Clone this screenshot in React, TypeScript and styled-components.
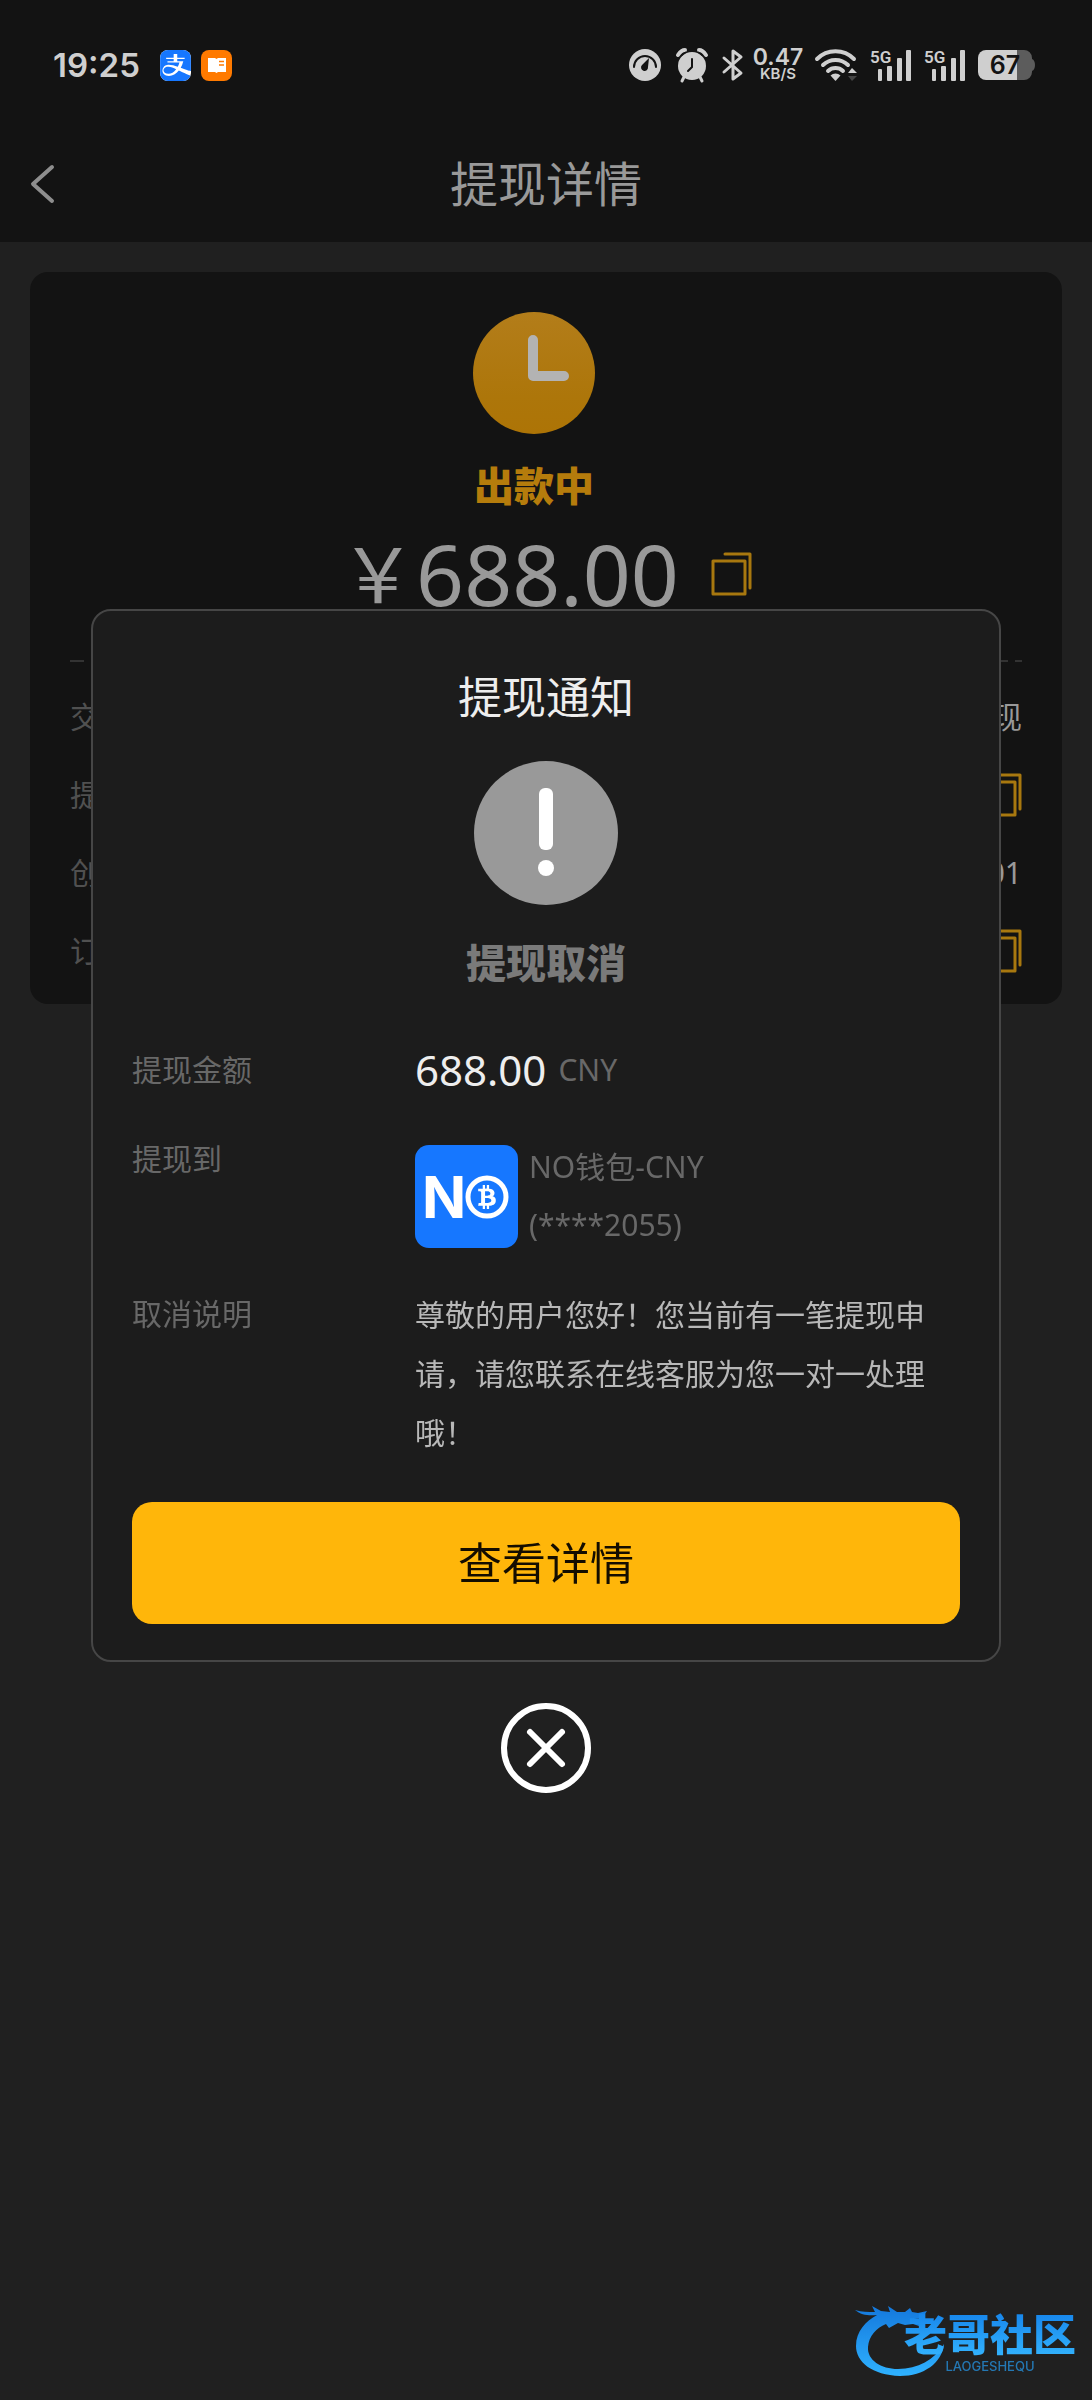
import React from 'react';
import styled, { createGlobalStyle } from 'styled-components';
import { SiAlipay } from 'react-icons/si';
import { FaBtc } from 'react-icons/fa';

const GlobalStyle = createGlobalStyle`
  *, *::before, *::after { box-sizing: border-box; }
  body {
    margin: 0;
    background: #202020;
    font-family: "Noto Sans", "Noto Sans CJK SC", sans-serif;
    font-weight: 400;
    color: #999;
  }
  button { font: inherit; border: 0; padding: 0; background: none; cursor: pointer; }
  h1, h2, p, dl, dt, dd { margin: 0; font-weight: inherit; }
  svg { display: block; flex: none; overflow: visible; }
`;

const Page = styled.div`
  min-height: 100vh;
  background: #202020;
`;

const StatusBar = styled.div`
  display: flex;
  align-items: center;
  justify-content: space-between;
  height: 130px;
  padding: 0 57px 0 53px;
  background: #131313;
  color: #cfcfcf;
  font-family: Inter, sans-serif;
`;

const StatusGroup = styled.div<{ $gap: number }>`
  display: flex;
  align-items: center;
  gap: ${(p) => p.$gap}px;
`;

const Clock = styled.span`
  margin-right: 10px;
  font-size: 33px;
  line-height: 40px;
  font-weight: 600;
`;

const AppTile = styled.span<{ $bg: string; $fg: string }>`
  display: flex;
  width: 31px;
  height: 31px;
  border-radius: 8px;
  overflow: hidden;
  background: ${(p) => p.$bg};
  color: ${(p) => p.$fg};
`;

const Speed = styled.span`
  display: flex;
  flex-direction: column;
  align-items: center;
  width: 48px;
  font-weight: 600;
  font-size: 23px;
  line-height: 18px;
`;

const SpeedUnit = styled.span`
  font-size: 15px;
  line-height: 16px;
`;

const Header = styled.header`
  display: grid;
  grid-template-columns: 80px 1fr 80px;
  align-items: center;
  height: 112px;
  padding-bottom: 4px;
  background: #131313;
`;

const BackButton = styled.button`
  display: flex;
  padding-left: 30px;
  color: #8e8e8e;
`;

const PageTitle = styled.h1`
  text-align: center;
  font-size: 48px;
  line-height: 64px;
`;

const Card = styled.section`
  margin: 30px 30px 0;
  padding: 40px 40px 14px;
  border-radius: 18px;
  background: #131313;
`;

const Summary = styled.div`
  display: flex;
  flex-direction: column;
  align-items: center;
  gap: 24px;
  padding-right: 24px;
`;

const StateText = styled.p<{ $color: string }>`
  font-size: 40px;
  line-height: 56px;
  font-weight: 900;
  color: ${(p) => p.$color};
`;

const AmountRow = styled.div`
  display: flex;
  align-items: center;
  justify-content: center;
  gap: 32px;
  height: 100px;
  margin-top: 10px;
`;

const Amount = styled.span`
  display: flex;
  align-items: center;
  font-size: 84px;
  line-height: 100px;
`;

const Yen = styled.span`
  font-size: 76px;
`;

const CopyButton = styled.button`
  display: flex;
  color: #a8780f;
`;

const Divider = styled.div`
  height: 2px;
  margin: 36px 0 16px;
  background: repeating-linear-gradient(90deg, #333 0 14px, transparent 14px 21px);
`;

const CardRow = styled.div`
  display: flex;
  align-items: center;
  justify-content: space-between;
  height: 78px;
  font-size: 30px;
  line-height: 44px;
`;

const CardLabel = styled.dt`
  color: #505050;
`;

const Overlay = styled.div`
  position: fixed;
  inset: 0;
  display: flex;
  flex-direction: column;
  align-items: center;
  justify-content: center;
  gap: 41px;
  padding: 2px 91px 0;
`;

const Dialog = styled.section`
  display: flex;
  flex-direction: column;
  align-items: center;
  width: 100%;
  padding: 54px 39px 36px;
  border: 2px solid #464646;
  border-radius: 20px;
  background: #1c1c1c;
`;

const DialogTitle = styled.h2`
  margin-bottom: 32px;
  font-size: 44px;
  line-height: 64px;
  color: #eee;
`;

const DialogState = styled.div`
  margin: 30px 0 50px;
`;

const Details = styled.dl`
  display: flex;
  flex-direction: column;
  gap: 31px;
  width: 100%;
  margin-bottom: 40px;
`;

const DetailRow = styled.div`
  display: grid;
  grid-template-columns: 283px 1fr;
  font-size: 30px;
  line-height: 58px;
  color: #686868;
`;

const MoneyValue = styled.dd`
  display: flex;
  align-items: center;
  gap: 12px;
`;

const Money = styled.span`
  font-size: 42px;
  color: #eee;
`;

const WalletValue = styled.dd`
  display: flex;
  align-items: center;
  gap: 11px;
  padding-top: 8px;
`;

const Note = styled.dd`
  padding-right: 20px;
  line-height: 59px;
  color: #b8b8b8;
`;

const PrimaryButton = styled.button`
  width: 100%;
  height: 122px;
  border-radius: 20px;
  background: #ffb60a;
  font-size: 44px;
  line-height: 64px;
  color: #140d00;
`;

const CloseButton = styled.button`
  display: flex;
  color: #fff;
`;

const Watermark = styled.div`
  position: fixed;
  right: 16px;
  bottom: 24px;
  display: flex;
  align-items: flex-end;
  color: #2a9ff5;
`;

const WatermarkText = styled.div`
  display: flex;
  flex-direction: column;
  align-items: center;
  margin-left: -41px;
  padding-bottom: 3px;
`;

const WatermarkName = styled.span`
  font-size: 43px;
  line-height: 50px;
  font-weight: 900;
  background: linear-gradient(#1583ea, #35b6ff);
  background-clip: text;
  -webkit-background-clip: text;
  color: transparent;
`;

const WatermarkLatin = styled.span`
  font-family: Inter, sans-serif;
  font-size: 13px;
  line-height: 13px;
  font-weight: 500;
  color: #2478b4;
`;

const CopyIcon = () => (
  <svg width="41" height="44" viewBox="0 0 41 44" fill="none" stroke="currentColor" strokeWidth="3" strokeLinejoin="round" strokeLinecap="round" aria-hidden="true">
    <rect x="2" y="9" width="32" height="33" />
    <path d="M14 2h25v34" />
  </svg>
);

const GaugeIcon = () => (
  <svg width="36" height="34" viewBox="0 0 36 34" aria-hidden="true">
    <circle cx="17" cy="17" r="16" fill="currentColor" />
    <path d="M6 19a11 11 0 1 1 22 0" fill="none" stroke="#131313" strokeWidth="2" strokeLinecap="round" />
    <path d="M21 10l-1 9a3.500 3.500 0 1 1-6-2z" fill="#131313" />
  </svg>
);

const AlarmIcon = () => (
  <svg width="32" height="34" viewBox="0 0 32 34" aria-hidden="true">
    <circle cx="16" cy="18" r="14" fill="currentColor" />
    <path d="M8 29l-2 4M24 29l2 4" stroke="currentColor" strokeWidth="3" strokeLinecap="round" />
    <path d="M2 7c2-3 4-5 7-5M30 7c-2-3-4-5-7-5" fill="none" stroke="currentColor" strokeWidth="4" strokeLinecap="round" />
    <path d="M5 8l5-4M27 8l-5-4" stroke="#131313" strokeWidth="1.500" />
    <path d="M16 11v8l-4 4" fill="none" stroke="#131313" strokeWidth="2" strokeLinecap="round" />
  </svg>
);

const BluetoothIcon = () => (
  <svg width="22" height="34" viewBox="0 0 22 34" fill="none" stroke="currentColor" strokeWidth="3" strokeLinejoin="round" strokeLinecap="round" aria-hidden="true">
    <path d="M4 10l17 15-8 6V3l8 6L4 24" />
  </svg>
);

const WifiIcon = () => (
  <svg width="44" height="34" viewBox="0 0 44 34" fill="none" stroke="currentColor" strokeWidth="4" strokeLinecap="round" aria-hidden="true">
    <path d="M3 11a26 26 0 0 1 37 0M9 17a18 18 0 0 1 25 0M14 23a11 11 0 0 1 15 0" />
    <path d="M16.500 27.500a7.500 7.500 0 0 1 10 0L21.500 33z" fill="currentColor" stroke="none" />
    <path d="M34 25l4-5 5 5z" fill="currentColor" stroke="none" />
    <path d="M34 28l4 5 5-5z" fill="#444" stroke="none" />
  </svg>
);

const SignalIcon = () => (
  <svg width="42" height="34" viewBox="0 0 42 34" fill="currentColor" role="img" aria-label="5G">
    <text x="0" y="15" fontSize="17" fontWeight="600" fontFamily="Roboto, sans-serif">5G</text>
    <rect x="8" y="21" width="4" height="12" rx="1" />
    <rect x="17" y="18" width="5" height="15" rx="1" />
    <rect x="27" y="10" width="5" height="23" rx="1" />
    <rect x="36" y="2" width="5" height="31" rx="1" />
  </svg>
);

const BatteryIcon = () => (
  <svg width="57" height="30" viewBox="0 0 57 30" role="img" aria-label="67%">
    <path d="M39 0h7a8 8 0 0 1 8 8v1c4 1 4 11 0 12v1a8 8 0 0 1-8 8h-7z" fill="#5c5c5c" />
    <path d="M8 0h31v30H8a8 8 0 0 1-8-8V8a8 8 0 0 1 8-8z" fill="currentColor" />
    <text x="27" y="24" textAnchor="middle" fontSize="25" fontWeight="600" fontFamily="Inter, sans-serif" fill="#131313">67</text>
  </svg>
);

const BookIcon = () => (
  <svg width="31" height="31" viewBox="0 0 31 31" aria-hidden="true">
    <path d="M7 8h7l1.500 1L17 8h8v14h-8l-1.500 1L14 22H7z" fill="#fff" />
    <path d="M18 11.500h5M18 15h5" stroke="#ff7a00" strokeWidth="1.500" />
  </svg>
);

const PendingIcon = () => (
  <svg width="122" height="122" viewBox="0 0 122 122" aria-hidden="true">
    <defs>
      <linearGradient id="pending" x1="0" y1="0" x2="0" y2="1">
        <stop offset="0" stopColor="#b37d1a" />
        <stop offset="0.700" stopColor="#ad760a" />
        <stop offset="1" stopColor="#ad7406" />
      </linearGradient>
    </defs>
    <circle cx="61" cy="61" r="61" fill="url(#pending)" />
    <path d="M60 28v36h31" fill="none" stroke="#b3b3b3" strokeWidth="10" strokeLinecap="round" strokeLinejoin="round" />
  </svg>
);

const WarningIcon = () => (
  <svg width="144" height="144" viewBox="0 0 144 144" aria-hidden="true">
    <circle cx="72" cy="72" r="72" fill="#999" />
    <rect x="65" y="27" width="14" height="62" rx="6" fill="#fff" />
    <circle cx="72" cy="107" r="8" fill="#fff" />
  </svg>
);

const WalletLogo = () => (
  <svg width="103" height="103" viewBox="0 0 103 103" role="img" aria-label="NO">
    <rect width="103" height="103" rx="14" fill="#1677ff" />
    <text x="7" y="73" fontSize="58" fontWeight="700" fontFamily="Inter, sans-serif" fill="#fff">N</text>
    <circle cx="72" cy="52" r="19" fill="none" stroke="#fff" strokeWidth="5" />
    <FaBtc x="60" y="40" size={24} color="#fff" />
  </svg>
);

const CloseIcon = () => (
  <svg width="90" height="90" viewBox="0 0 90 90" fill="none" stroke="currentColor" strokeLinecap="round" aria-hidden="true">
    <circle cx="45" cy="45" r="42" strokeWidth="6" />
    <path d="M29 29l32 32M61 29L29 61" strokeWidth="6" />
  </svg>
);

const DragonIcon = () => (
  <svg width="90" height="72" viewBox="0 0 90 72" aria-hidden="true">
    <defs>
      <linearGradient id="dragon" x1="0" y1="0" x2="0" y2="1">
        <stop offset="0" stopColor="#1478dc" />
        <stop offset="1" stopColor="#2fb2ff" />
      </linearGradient>
    </defs>
    <path
      d="M0 6c7 2 13 2 20 2l-3-6 9 5 9 1-2-6 9 6 8 0 5-4 2 4 6 1 9-2-4 6-9 2 8 2c1 2 1 4 0 6l-9-3-8 1-7-2-9 5-3-4c-10 4-17 12-18 23-1 13 13 22 30 22 20 0 36-9 46-25-2 19-20 32-44 32C17 71 1 58 1 42 1 27 11 17 22 11 14 12 6 11 0 6z"
      fill="url(#dragon)"
    />
  </svg>
);

const records = [
  { label: '交易类型', value: '提现' },
  { label: '提现单号', value: null },
  { label: '创建时间', value: '19:25:01' },
  { label: '订单编号', value: null },
];

export default function App() {
  return (
    <Page>
      <GlobalStyle />
      <StatusBar>
        <StatusGroup $gap={10}>
          <Clock>19:25</Clock>
          <AppTile $bg="#fff" $fg="#1677ff"><SiAlipay size={31} /></AppTile>
          <AppTile $bg="#ff7a00" $fg="#fff"><BookIcon /></AppTile>
        </StatusGroup>
        <StatusGroup $gap={12}>
          <GaugeIcon />
          <AlarmIcon />
          <BluetoothIcon />
          <Speed>0.47<SpeedUnit>KB/S</SpeedUnit></Speed>
          <WifiIcon />
          <SignalIcon />
          <SignalIcon />
          <BatteryIcon />
        </StatusGroup>
      </StatusBar>

      <Header>
        <BackButton type="button" aria-label="返回">
          <svg width="24" height="38" viewBox="0 0 24 38" fill="none" stroke="currentColor" strokeWidth="4" strokeLinecap="round" strokeLinejoin="round">
            <path d="M22 2L3 19l19 17" />
          </svg>
        </BackButton>
        <PageTitle>提现详情</PageTitle>
      </Header>

      <main>
        <Card>
          <Summary>
            <PendingIcon />
            <StateText $color="#b57c0c">出款中</StateText>
          </Summary>
          <AmountRow>
            <Amount><Yen>￥</Yen>688.00</Amount>
            <CopyButton type="button" aria-label="复制金额"><CopyIcon /></CopyButton>
          </AmountRow>
          <Divider />
          <dl>
            {records.map((r) => (
              <CardRow key={r.label}>
                <CardLabel>{r.label}</CardLabel>
                <dd>
                  {r.value ?? (
                    <CopyButton type="button" aria-label={`复制${r.label}`}><CopyIcon /></CopyButton>
                  )}
                </dd>
              </CardRow>
            ))}
          </dl>
        </Card>
      </main>

      <Overlay>
        <Dialog role="dialog" aria-modal="true" aria-labelledby="notice-title">
          <DialogTitle id="notice-title">提现通知</DialogTitle>
          <WarningIcon />
          <DialogState>
            <StateText $color="#7a7a7a">提现取消</StateText>
          </DialogState>
          <Details>
            <DetailRow>
              <dt>提现金额</dt>
              <MoneyValue><Money>688.00</Money>CNY</MoneyValue>
            </DetailRow>
            <DetailRow>
              <dt>提现到</dt>
              <WalletValue>
                <WalletLogo />
                <span>NO钱包-CNY<br />(****2055)</span>
              </WalletValue>
            </DetailRow>
            <DetailRow>
              <dt>取消说明</dt>
              <Note>尊敬的用户您好！您当前有一笔提现申请，请您联系在线客服为您一对一处理哦！</Note>
            </DetailRow>
          </Details>
          <PrimaryButton type="button">查看详情</PrimaryButton>
        </Dialog>
        <CloseButton type="button" aria-label="关闭"><CloseIcon /></CloseButton>
      </Overlay>

      <Watermark>
        <DragonIcon />
        <WatermarkText>
          <WatermarkName>老哥社区</WatermarkName>
          <WatermarkLatin>LAOGESHEQU</WatermarkLatin>
        </WatermarkText>
      </Watermark>
    </Page>
  );
}
